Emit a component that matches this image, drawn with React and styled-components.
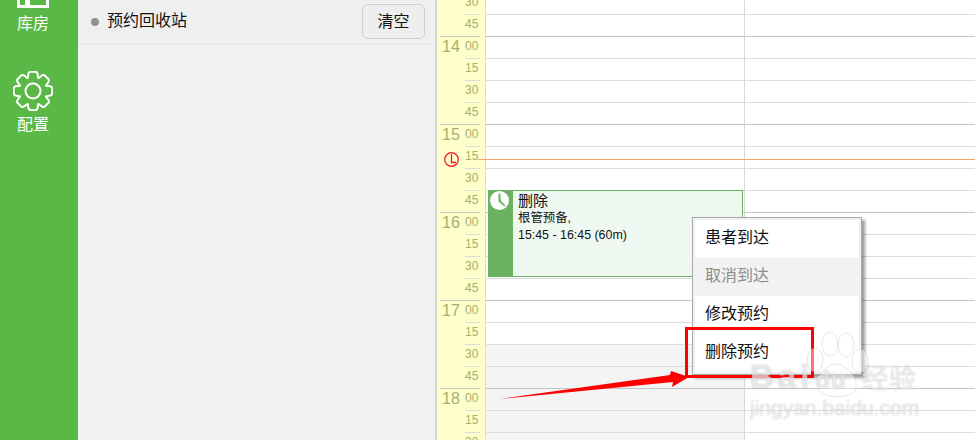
import React from "react";
import styled, { createGlobalStyle } from "styled-components";

const FONT = `"Liberation Sans", "Noto Sans CJK SC", sans-serif`;

const slots = [];
for (let h = 13; h <= 18; h++) {
  ["00", "15", "30", "45"].forEach((m) => {
    if (h === 13 && m < "30") return;
    if (h === 18 && m > "30") return;
    slots.push({ h, m });
  });
}

const menuItems = [
  { label: "患者到达" },
  { label: "取消到达", disabled: true },
  { label: "修改预约" },
  { label: "删除预约" },
];

function App() {
  return (
    <Page>
      <GlobalStyle />
      <Sidebar>
        <NavItem>
          <svg width="32" height="10" viewBox="0 0 32 10" fill="none" stroke="#fff">
            <path d="M1.5 0V6.5H30.5V0" strokeWidth="3" />
            <rect x="8" y="0" width="5" height="6" fill="#fff" stroke="none" />
          </svg>
          <NavLabel>库房</NavLabel>
        </NavItem>
        <GearItem>
          <GearIcon />
          <NavLabel>配置</NavLabel>
        </GearItem>
      </Sidebar>

      <Panel>
        <PanelHeader>
          <Dot />
          <PanelTitle>预约回收站</PanelTitle>
          <ClearButton>清空</ClearButton>
        </PanelHeader>
      </Panel>

      <Calendar>
        <Gutter />
        <Grid>
          {slots.map(({ h, m }) => (
            <Row key={`${h}${m}`}>
              <TimeCell>
                <HourLabel $hour={m === "00"}>{m === "00" ? h : ""}</HourLabel>
                <MinuteLabel $hour={m === "00"}>{m}</MinuteLabel>
              </TimeCell>
              <DayCell $hour={m === "00"} $off={h + Number(m) / 60 >= 17.5} />
              <DayCell $hour={m === "00"} $last />
            </Row>
          ))}
        </Grid>

        <NowLine />
        <NowIcon width="15" height="15" viewBox="0 0 15 15" fill="none" stroke="#ee1c25">
          <circle cx="7.5" cy="7.5" r="6.8" strokeWidth="1.3" />
          <path d="M7.5 2V10.5H12" strokeWidth="1.3" />
        </NowIcon>

        <Appointment>
          <AppointmentSide>
            <svg width="19" height="19" viewBox="0 0 19 19">
              <circle cx="9.5" cy="9.5" r="9.5" fill="#fff" />
              <path d="M8.5 2.5H10.2L10.8 9.5L15.5 14.5L14.5 15.5L8.5 10.5Z" fill="#6bb15f" />
            </svg>
          </AppointmentSide>
          <AppointmentBody>
            <AppointmentTitle>删除</AppointmentTitle>
            <AppointmentText>根管预备,</AppointmentText>
            <AppointmentText>15:45 - 16:45 (60m)</AppointmentText>
          </AppointmentBody>
        </Appointment>

        <Menu>
          {menuItems.map((item) => (
            <MenuItem key={item.label} $disabled={item.disabled}>
              {item.label}
            </MenuItem>
          ))}
        </Menu>
      </Calendar>

      <Highlight />
      <Arrow width="200" height="40" viewBox="0 0 200 40">
        <path d="M0 31L170 7L171 3L189 9L172 19L173 14Z" fill="#fe0000" />
      </Arrow>

      <Watermark>
        <PawIcon width="70" height="70" viewBox="0 0 70 70">
          <ellipse cx="13" cy="30" rx="8" ry="12" />
          <ellipse cx="28" cy="14" rx="8" ry="12" />
          <ellipse cx="44" cy="15" rx="8" ry="12" />
          <ellipse cx="58" cy="31" rx="8" ry="12" />
          <path d="M34 34C24 34 10 50 18 62C26 68 44 68 52 62C60 50 44 34 34 34Z" />
        </PawIcon>
        <WatermarkBrand>
          Bai<BrandDu>du</BrandDu>
          <BrandCn>经验</BrandCn>
        </WatermarkBrand>
        <WatermarkUrl>jingyan.baidu.com</WatermarkUrl>
      </Watermark>
    </Page>
  );
}

function GearIcon() {
  const cx = 20;
  const cy = 20;
  const n = 8;
  const step = (Math.PI * 2) / n;
  const pt = (a, r) => `${(cx + Math.cos(a) * r).toFixed(2)} ${(cy + Math.sin(a) * r).toFixed(2)}`;
  let d = `M${pt(-step / 2, 14)} `;
  for (let i = 0; i < n; i++) {
    const t = i * step;
    // flank up from the valley, rounded flat top, flank back down
    d += `C${pt(t - 0.28, 15)} ${pt(t - 0.32, 19.5)} ${pt(t - 0.14, 19.5)} `;
    d += `L${pt(t + 0.14, 19.5)} `;
    d += `C${pt(t + 0.32, 19.5)} ${pt(t + 0.28, 15)} ${pt(t + step / 2, 14)} `;
  }
  return (
    <svg width="40" height="40" viewBox="0 0 40 40" fill="none" stroke="#fff" strokeWidth="2">
      <path d={d + "Z"} strokeLinejoin="round" />
      <circle cx="20" cy="20" r="7.5" />
    </svg>
  );
}

export default App;

const GlobalStyle = createGlobalStyle`
  html, body {
    margin: 0;
    padding: 0;
    width: 975px;
    height: 440px;
    overflow: hidden;
    font-family: ${FONT};
  }
`;

const Page = styled.div`
  position: relative;
  display: flex;
  width: 975px;
  height: 440px;
  overflow: hidden;
  background: #fff;
`;

const Sidebar = styled.div`
  width: 78px;
  flex: none;
  box-sizing: border-box;
  padding-right: 12px;
  background: #5ab946;
  display: flex;
  flex-direction: column;
  align-items: center;
`;

const NavItem = styled.div`
  display: flex;
  flex-direction: column;
  align-items: center;
  gap: 4px;
  color: #fff;
`;

const GearItem = styled(NavItem)`
  margin-top: 37px;
`;

const NavLabel = styled.div`
  font-size: 16px;
  line-height: 20px;
`;

const Panel = styled.div`
  width: 357px;
  flex: none;
  box-sizing: border-box;
  padding-right: 4px;
  background: #f2f2f2;
`;

const PanelHeader = styled.div`
  height: 45px;
  box-sizing: border-box;
  border-bottom: 1px solid #e4e4e4;
  background: #efefef;
  display: flex;
  align-items: center;
  padding: 0 6px 0 13px;
`;

const Dot = styled.span`
  width: 8px;
  height: 8px;
  border-radius: 50%;
  background: #929292;
  margin-right: 8px;
`;

const PanelTitle = styled.div`
  flex: 1;
  font-size: 16px;
  line-height: 20px;
  margin-top: -3px;
  color: #111;
`;

const ClearButton = styled.button`
  width: 63px;
  height: 35px;
  margin-top: -1px;
  border: 1px solid #cfcfcf;
  border-radius: 6px;
  background: #eeeeee;
  font-family: ${FONT};
  font-size: 16px;
  color: #111;
  padding: 0 0 3px;
`;

const Calendar = styled.div`
  position: relative;
  flex: 1;
  display: flex;
  min-width: 0;
`;

const Gutter = styled.div`
  width: 2px;
  flex: none;
  background: #d6d6d6;
`;

const Grid = styled.div`
  flex: 1;
  margin-top: -8px;
`;

const Row = styled.div`
  display: flex;
  height: 22px;
`;

const TimeCell = styled.div`
  width: 49px;
  flex: none;
  box-sizing: border-box;
  background: #ffffcc;
  border-right: 1px solid #dcdcc8;
  display: flex;
  color: #a6b06c;
  padding-left: 3px;
`;

const HourLabel = styled.div`
  width: 25px;
  flex: none;
  box-sizing: border-box;
  border-top: 1px solid ${(p) => (p.$hour ? "#c4c4c4" : "transparent")};
  font-size: 16px;
  line-height: 20px;
  text-align: center;
  padding-right: 3px;
`;

const MinuteLabel = styled.div`
  width: 15px;
  flex: none;
  box-sizing: border-box;
  border-top: 1px solid ${(p) => (p.$hour ? "#c4c4c4" : "#dcdcdc")};
  font-size: 12px;
  line-height: 18px;
`;

const DayCell = styled.div`
  flex: ${(p) => (p.$last ? "1" : "none")};
  width: ${(p) => (p.$last ? "auto" : "259px")};
  box-sizing: border-box;
  background: ${(p) => (p.$off ? "#f4f4f4" : "#fff")};
  border-right: ${(p) => (p.$last ? "0" : "1px solid #d8d8d8")};
  border-top: 1px solid ${(p) => (p.$hour ? "#c4c4c4" : "#dcdcdc")};
`;

const NowLine = styled.div`
  position: absolute;
  left: 43px;
  right: 0;
  top: 159px;
  height: 1px;
  background: #f4a46c;
`;

const NowIcon = styled.svg`
  position: absolute;
  left: 9px;
  top: 152px;
`;

const Appointment = styled.div`
  position: absolute;
  left: 53px;
  top: 190px;
  width: 255px;
  height: 87px;
  box-sizing: border-box;
  border: 1px solid #6bb15f;
  background: #eff8f0;
  display: flex;
`;

const AppointmentSide = styled.div`
  width: 24px;
  flex: none;
  box-sizing: border-box;
  background: #6bb15f;
  padding-left: 1px;
`;

const AppointmentBody = styled.div`
  padding: 1px 0 0 5px;
  color: #111;
`;

const AppointmentTitle = styled.div`
  font-size: 15px;
  line-height: 18px;
`;

const AppointmentText = styled.div`
  font-size: 12.4px;
  line-height: 17px;
`;

const Menu = styled.div`
  position: absolute;
  left: 257px;
  top: 217px;
  width: 170px;
  height: 158px;
  box-sizing: border-box;
  padding: 2px;
  border: 1px solid #a9a9a9;
  background: #f0f0f0;
  box-shadow: 3px 3px 3px rgba(0, 0, 0, 0.4);
`;

const MenuItem = styled.div`
  height: 38px;
  line-height: 36px;
  padding-left: 10px;
  font-size: 16px;
  color: ${(p) => (p.$disabled ? "#8d8d8d" : "#111")};
  background: ${(p) => (p.$disabled ? "#f2f2f2" : "#fff")};
`;

const Highlight = styled.div`
  position: absolute;
  left: 685px;
  top: 327px;
  width: 129px;
  height: 51px;
  box-sizing: border-box;
  border: 3px solid #fe0000;
`;

const Arrow = styled.svg`
  position: absolute;
  left: 500px;
  top: 368px;
`;

const Watermark = styled.div`
  position: absolute;
  left: 750px;
  top: 330px;
  width: 190px;
  height: 95px;
  color: rgba(255, 255, 255, 0.6);
  text-shadow: 0 0 1.5px rgba(120, 120, 120, 0.45);
`;

const PawIcon = styled.svg`
  position: absolute;
  left: 52px;
  top: 0;
  fill: rgba(255, 255, 255, 0.45);
  stroke: rgba(140, 140, 140, 0.2);
`;

const WatermarkBrand = styled.div`
  position: absolute;
  left: 0;
  top: 27px;
  display: flex;
  align-items: baseline;
  font-size: 33px;
  font-weight: 700;
  letter-spacing: 4px;
  white-space: nowrap;
`;

const BrandDu = styled.span`
  font-size: 24px;
  letter-spacing: 1px;
  margin-left: 2px;
`;

const BrandCn = styled.span`
  font-size: 27px;
  font-weight: 400;
  letter-spacing: 0;
  margin-left: 15px;
`;

const WatermarkUrl = styled.div`
  position: absolute;
  left: 0;
  top: 66px;
  font-size: 21px;
  white-space: nowrap;
`;
